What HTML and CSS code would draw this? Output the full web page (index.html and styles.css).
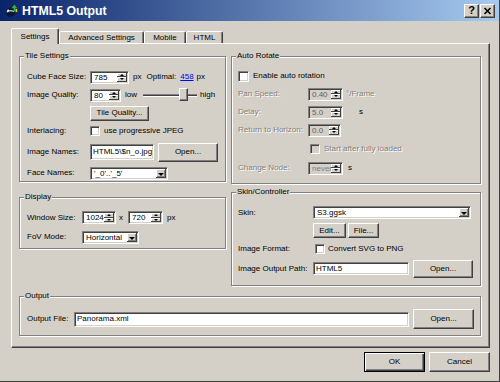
FILE: index.html
```html
<!DOCTYPE html>
<html>
<head>
<meta charset="utf-8">
<link rel="stylesheet" href="styles.css">
</head>
<body>
<div class="window">
  <div class="titlebar">
    <svg class="appicon" viewBox="0 0 13 13">
      <circle cx="5.5" cy="8.2" r="4.6" fill="#0b1838"/>
      <path d="M1.8 8 Q5 5.8 9.2 7.4" stroke="#e8eef8" stroke-width="1.1" fill="none"/>
      <circle cx="3.2" cy="6.6" r="1" fill="#fff"/>
      <path d="M6.5 4.2 L9.5 0.6 L12.2 4.2 Z" fill="#38b040"/>
      <rect x="8.7" y="3.8" width="1.6" height="3.2" fill="#38b040"/>
      <rect x="10.6" y="5" width="1.6" height="3" fill="#e8d020"/>
    </svg>
    <span class="title">HTML5 Output</span>
    <div class="tbtns">
      <span class="tbtn">?</span>
      <span class="tbtn"><svg viewBox="0 0 11 10"><path d="M2.5 2 L8.5 8 M8.5 2 L2.5 8" stroke="#000" stroke-width="1.6"/></svg></span>
    </div>
  </div>

  <div class="tabs">
    <div class="tab active t-settings">Settings</div>
    <div class="tab t-adv">Advanced Settings</div>
    <div class="tab t-mobile">Mobile</div>
    <div class="tab t-html">HTML</div>
  </div>

  <div class="panel">
    <div class="cols">
      <div class="col col-left">
        <div class="group tile">
          <span class="legend">Tile Settings</span>

          <span>Cube Face Size:</span>
          <div class="cell">
            <div class="spin sunken w39"><span class="val">785</span><span class="arrows"><i class="up"></i><i class="dn"></i></span></div>
            <span class="ml4">px</span><span class="ml5">Optimal:</span><span class="link ml4">458</span><span class="ml3">px</span>
          </div>

          <span>Image Quality:</span>
          <div class="cell">
            <div class="spin sunken w31"><span class="val">80</span><span class="arrows"><i class="up"></i><i class="dn"></i></span></div>
            <span class="ml4">low</span>
            <div class="slider ml5"><div class="track"></div><div class="thumb"></div></div>
            <span class="ml2">high</span>
          </div>

          <span></span>
          <div class="cell">
            <div class="btn w59 h15">Tile Quality...</div>
          </div>

          <span>Interlacing:</span>
          <div class="cell">
            <div class="check sunken"></div>
            <span class="ml4">use progressive JPEG</span>
          </div>

          <span>Image Names:</span>
          <div class="cell">
            <div class="input sunken w64 h16">HTML5\$n_o.jpg</div>
            <div class="btn w60 h19 ml4">Open...</div>
          </div>

          <span>Face Names:</span>
          <div class="cell">
            <div class="combo sunken w78"><span class="val">'_0'..'_5'</span><span class="drop"></span></div>
          </div>
        </div>

        <div class="group display">
          <span class="legend">Display</span>

          <span>Window Size:</span>
          <div class="cell">
            <div class="spin sunken w34"><span class="val">1024</span><span class="arrows"><i class="up"></i><i class="dn"></i></span></div>
            <span class="ml3">x</span>
            <div class="spin sunken w35 ml5"><span class="val">720</span><span class="arrows"><i class="up"></i><i class="dn"></i></span></div>
            <span class="ml4">px</span>
          </div>

          <span>FoV Mode:</span>
          <div class="cell">
            <div class="combo sunken w57"><span class="val">Horizontal</span><span class="drop"></span></div>
          </div>
        </div>
      </div>

      <div class="col col-right">
        <div class="group auto">
          <span class="legend">Auto Rotate</span>

          <div class="cell span2">
            <div class="check sunken big"></div>
            <span class="ml4">Enable auto rotation</span>
          </div>

          <span class="dis">Pan Speed:</span>
          <div class="cell">
            <div class="spin sunken off w35"><span class="val">0.40</span><span class="arrows"><i class="up"></i><i class="dn"></i></span></div>
            <span class="ml3 dis">&deg;/Frame</span>
          </div>

          <span class="dis">Delay:</span>
          <div class="cell">
            <div class="spin sunken off w35"><span class="val">5.0</span><span class="arrows"><i class="up"></i><i class="dn"></i></span></div>
            <span class="ml16">s</span>
          </div>

          <span class="dis">Return to Horizon:</span>
          <div class="cell">
            <div class="spin sunken off w33"><span class="val">0.0</span><span class="arrows"><i class="up"></i><i class="dn"></i></span></div>
          </div>

          <span></span>
          <div class="cell">
            <div class="check sunken off ml2"></div>
            <span class="ml4 dis">Start after fully loaded</span>
          </div>

          <span class="dis">Change Node:</span>
          <div class="cell">
            <div class="spin sunken off w35"><span class="val never">never</span><span class="arrows"><i class="up"></i><i class="dn"></i></span></div>
            <span class="ml5">s</span>
          </div>
        </div>

        <div class="group skin">
          <span class="legend">Skin/Controller</span>

          <span>Skin:</span>
          <div class="cell">
            <div class="combo sunken w158"><span class="val">S3.ggsk</span><span class="drop"></span></div>
          </div>

          <span></span>
          <div class="cell">
            <div class="btn w33 h15">Edit...</div>
            <div class="btn w31 h15 ml2">File...</div>
          </div>

          <span>Image Format:</span>
          <div class="cell">
            <div class="check sunken ml2"></div>
            <span class="ml3">Convert SVG to PNG</span>
          </div>

          <span>Image Output Path:</span>
          <div class="cell">
            <div class="input sunken w96 h13">HTML5</div>
            <div class="btn w60 h18 ml4">Open...</div>
          </div>
        </div>
      </div>
    </div>

    <div class="group output">
      <span class="legend">Output</span>
      <span>Output File:</span>
      <div class="cell">
        <div class="input sunken w335 h15">Panorama.xml</div>
        <div class="btn w61 h20 ml4">Open...</div>
      </div>
    </div>
  </div>

  <div class="actions">
    <div class="btn default w61 h20">OK</div>
    <div class="btn w61 h20">Cancel</div>
  </div>
</div>
</body>
</html>
```

FILE: styles.css
```css
* { box-sizing: border-box; margin: 0; padding: 0; }
html, body { width: 500px; height: 382px; overflow: hidden; }
body {
  background: #d4d0c8;
  font-family: "Liberation Sans", Arial, sans-serif;
  font-size: 8px;
  line-height: 10px;
  color: #000;
}

.window {
  width: 500px;
  height: 382px;
  display: flex;
  flex-direction: column;
  background: #d4d0c8;
  border-right: 1px solid #404040;
  border-bottom: 1px solid #404040;
}

/* title bar */
.titlebar {
  flex: none;
  height: 21px;
  display: flex;
  align-items: center;
  padding: 0 4px 0 5px;
  background: linear-gradient(to right, #0a246a 0%, #a6caf0 100%);
}
.appicon { flex: none; width: 13px; height: 13px; }
.title {
  margin-left: 4px;
  color: #fff;
  font-weight: bold;
  font-size: 12.3px;
  line-height: 14px;
}
.tbtns { margin-left: auto; display: flex; gap: 1px; }
.tbtn {
  width: 15px;
  height: 14px;
  display: flex;
  align-items: center;
  justify-content: center;
  background: #d4d0c8;
  border: 1px solid;
  border-color: #fff #404040 #404040 #fff;
  box-shadow: inset -1px -1px 0 #808080;
  font-weight: bold;
  font-size: 11px;
  line-height: 11px;
}
.tbtn svg { width: 11px; height: 10px; }

/* tabs */
.tabs {
  flex: none;
  height: 15px;
  margin-top: 7px;
  padding-left: 11px;
  display: flex;
  align-items: flex-end;
  position: relative;
  z-index: 1;
}
.tab {
  height: 12px;
  display: flex;
  align-items: center;
  justify-content: center;
  background: #d4d0c8;
  border: 1px solid;
  border-bottom: 0;
  border-color: #fff #404040 transparent #fff;
  border-radius: 2px 2px 0 0;
  box-shadow: inset -1px 0 0 #808080;
}
.tab.active { height: 16px; margin-bottom: -1px; }
.t-settings { width: 48px; }
.t-adv { width: 85px; }
.t-mobile { width: 42px; }
.t-html { width: 37px; }

/* panel */
.panel {
  flex: none;
  margin-left: 11px;
  width: 479px;
  height: 305px;
  border: 1px solid;
  border-color: #fff #404040 #404040 #fff;
  box-shadow: inset -1px -1px 0 #808080;
  padding: 12px 0 0 7px;
}
.cols { display: flex; gap: 5px; align-items: flex-start; }
.col { display: flex; flex-direction: column; }
.col-left { width: 207px; gap: 15px; }
.col-right { width: 250px; gap: 8px; }

/* group boxes */
.group {
  position: relative;
  border: 1px solid #808080;
  box-shadow: 1px 1px 0 #fff, inset 1px 1px 0 #fff;
  display: grid;
  align-items: center;
  align-content: start;
}
.legend {
  position: absolute;
  top: -6px;
  left: 4px;
  padding: 0 1px;
  background: #d4d0c8;
}
.tile {
  height: 126px;
  padding: 11px 0 0 7px;
  grid-template-columns: 63px auto;
  grid-template-rows: 18px 18px 18px 17px 26px 16px;
}
.display {
  height: 52px;
  padding: 10px 0 0 7px;
  grid-template-columns: 55px auto;
  grid-template-rows: 19px 20px;
}
.auto {
  height: 128px;
  padding: 10px 0 0 6px;
  grid-template-columns: 70px auto;
  grid-template-rows: 18px 18px 18px 18px 19px 20px;
}
.skin {
  height: 94px;
  padding: 10px 0 0 6px;
  grid-template-columns: 75px auto;
  grid-template-rows: 19px 17px 19px 21px;
}
.output {
  margin-top: 10px;
  width: 462px;
  height: 40px;
  padding: 12px 0 0 7px;
  grid-template-columns: 47px auto;
  grid-template-rows: 20px;
}
.cell { display: flex; align-items: center; white-space: nowrap; }
.span2 { grid-column: 1 / span 2; }

/* widgets */
.sunken {
  border: 1px solid;
  border-color: #808080 #fff #fff #808080;
  box-shadow: inset 1px 1px 0 #404040, inset -1px -1px 0 #d4d0c8;
}
.spin {
  height: 13px;
  display: flex;
  background: #fff;
  padding: 1px;
}
.spin .val {
  flex: 1;
  padding-left: 2px;
  line-height: 10px;
  overflow: hidden;
  white-space: nowrap;
}
.arrows {
  flex: none;
  width: 10px;
  display: flex;
  flex-direction: column;
}
.arrows i {
  flex: 1;
  position: relative;
  background: #d4d0c8;
  box-shadow: inset -1px -1px 0 #404040, inset 1px 1px 0 #fff;
}
.arrows i::after {
  content: "";
  position: absolute;
  left: 3px;
  width: 0;
  height: 0;
  border-left: 2px solid transparent;
  border-right: 2px solid transparent;
}
.arrows .up::after { top: 1px; border-bottom: 2px solid #000; }
.arrows .dn::after { top: 1px; border-top: 2px solid #000; }
.spin.off { background: #d4d0c8; color: #606060; }
.spin.off .never { color: #808080; }

.combo {
  height: 13px;
  display: flex;
  background: #fff;
  padding: 1px;
}
.combo .val {
  flex: 1;
  padding-left: 2px;
  line-height: 10px;
  overflow: hidden;
  white-space: nowrap;
}
.drop {
  flex: none;
  width: 10px;
  position: relative;
  background: #d4d0c8;
  box-shadow: inset -1px -1px 0 #404040, inset 1px 1px 0 #fff, inset -2px -2px 0 #808080;
}
.drop::after {
  content: "";
  position: absolute;
  left: 2px;
  top: 4px;
  border-left: 3px solid transparent;
  border-right: 3px solid transparent;
  border-top: 3px solid #000;
}

.input {
  display: flex;
  align-items: center;
  background: #fff;
  padding-left: 2px;
  overflow: hidden;
  white-space: nowrap;
}

.check { flex: none; width: 10px; height: 10px; background: #fff; }
.check.big { width: 11px; height: 11px; }
.check.off { background: #d4d0c8; }

.btn {
  flex: none;
  display: flex;
  align-items: center;
  justify-content: center;
  background: #d4d0c8;
  border: 1px solid;
  border-color: #fff #404040 #404040 #fff;
  box-shadow: inset -1px -1px 0 #808080;
  white-space: nowrap;
}
.btn.default {
  border-color: #000;
  box-shadow: inset 1px 1px 0 #fff, inset -1px -1px 0 #404040, inset -2px -2px 0 #808080;
}

.slider {
  position: relative;
  width: 56px;
  height: 14px;
  display: flex;
  align-items: center;
  padding: 0 1px;
}
.track {
  flex: 1;
  height: 3px;
  border-top: 1px solid #808080;
  border-bottom: 1px solid #fff;
  background: #404040;
}
.thumb {
  position: absolute;
  left: 37px;
  top: 0;
  width: 9px;
  height: 13px;
  background: #d4d0c8;
  border: 1px solid;
  border-color: #fff #404040 #404040 #fff;
  box-shadow: inset -1px -1px 0 #808080;
}

.link { color: #0000ff; text-decoration: underline; }
.dis { color: #808080; text-shadow: 1px 1px 0 #fff; }

/* bottom buttons */
.actions {
  flex: none;
  margin-top: 4px;
  display: flex;
  justify-content: flex-end;
  gap: 4px;
  padding-right: 9px;
}

/* sizes & spacing */
.w31 { width: 31px; } .w33 { width: 33px; } .w34 { width: 34px; }
.w35 { width: 35px; } .w39 { width: 39px; } .w57 { width: 57px; }
.w59 { width: 59px; } .w60 { width: 60px; } .w61 { width: 61px; }
.w64 { width: 64px; } .w78 { width: 78px; } .w96 { width: 96px; }
.w158 { width: 158px; } .w335 { width: 335px; }
.h13 { height: 13px; } .h15 { height: 15px; } .h16 { height: 16px; }
.h18 { height: 18px; } .h19 { height: 19px; } .h20 { height: 20px; }
.ml2 { margin-left: 2px; } .ml3 { margin-left: 3px; } .ml4 { margin-left: 4px; }
.ml5 { margin-left: 5px; } .ml16 { margin-left: 16px; }
```
